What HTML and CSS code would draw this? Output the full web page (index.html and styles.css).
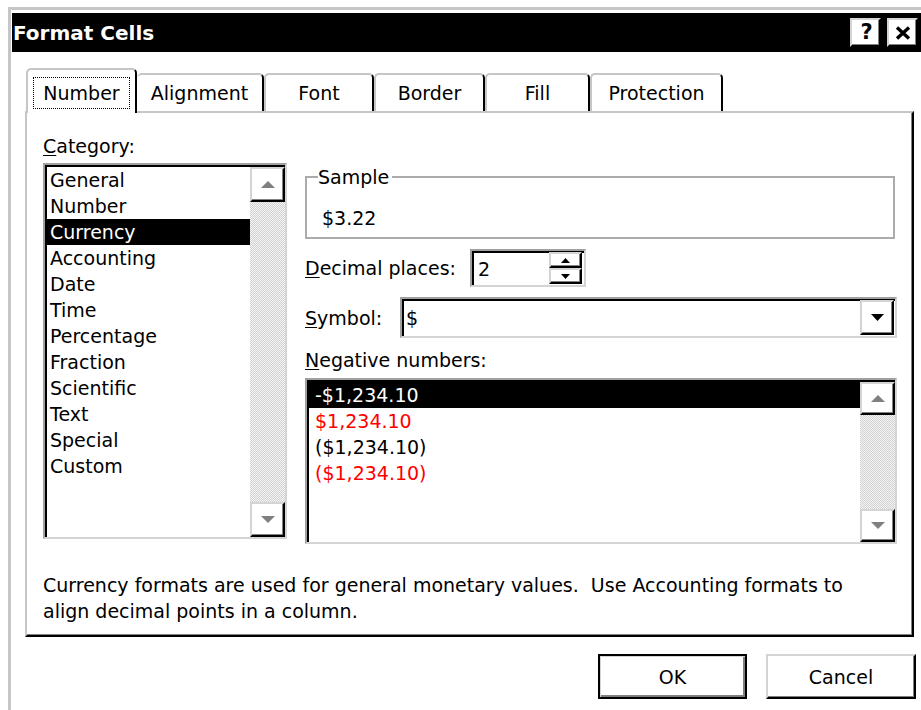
FILE: index.html
```html
<!DOCTYPE html>
<html lang="en">
<head>
<meta charset="utf-8">
<title>Format Cells</title>
<link rel="stylesheet" href="styles.css">
</head>
<body>
<div class="window">
  <div class="titlebar">
    <span class="title">Format Cells</span>
    <div class="caption-buttons">
      <span class="cap-btn cap-help">?</span>
      <span class="cap-btn cap-close">
        <svg width="16" height="14" viewBox="0 0 16 14"><path d="M2 1.5 L14 12.5 M14 1.5 L2 12.5" stroke="#000" stroke-width="3.4" fill="none"/></svg>
      </span>
    </div>
  </div>

  <div class="client">
    <div class="tabs">
      <div class="tab tab-number active"><span class="focus">Number</span></div>
      <div class="tab tab-alignment after-active">Alignment</div>
      <div class="tab tab-font">Font</div>
      <div class="tab tab-border">Border</div>
      <div class="tab tab-fill">Fill</div>
      <div class="tab tab-protection">Protection</div>
    </div>

    <div class="panel">
      <div class="columns">
        <div class="col-left">
          <div class="label"><u>C</u>ategory:</div>
          <div class="listbox category">
            <ul class="items">
              <li>General</li>
              <li>Number</li>
              <li class="selected">Currency</li>
              <li>Accounting</li>
              <li>Date</li>
              <li>Time</li>
              <li>Percentage</li>
              <li>Fraction</li>
              <li>Scientific</li>
              <li>Text</li>
              <li>Special</li>
              <li>Custom</li>
            </ul>
            <div class="vscroll">
              <div class="sbtn">
                <svg width="14" height="7" viewBox="0 0 14 7"><polygon points="0,7 7,0 14,7" fill="#808080"/></svg>
              </div>
              <div class="track"></div>
              <div class="sbtn">
                <svg width="14" height="7" viewBox="0 0 14 7"><polygon points="0,0 14,0 7,7" fill="#808080"/></svg>
              </div>
            </div>
          </div>
        </div>

        <div class="col-right">
          <fieldset class="sample">
            <legend>Sample</legend>
            <div class="sample-value">$3.22</div>
          </fieldset>

          <div class="field-row decimal-row">
            <span class="decimal-label"><u>D</u>ecimal places:</span>
            <div class="spinbox">
              <span class="spin-value">2</span>
              <div class="spin-buttons">
                <div class="spin-btn">
                  <svg width="9" height="5" viewBox="0 0 9 5"><polygon points="0,5 4.5,0 9,5" fill="#000"/></svg>
                </div>
                <div class="spin-btn">
                  <svg width="9" height="5" viewBox="0 0 9 5"><polygon points="0,0 9,0 4.5,5" fill="#000"/></svg>
                </div>
              </div>
            </div>
          </div>

          <div class="field-row symbol-row">
            <span class="symbol-label"><u>S</u>ymbol:</span>
            <div class="combo">
              <span class="combo-value">$</span>
              <div class="combo-btn">
                <svg width="13" height="7" viewBox="0 0 13 7"><polygon points="0,0 13,0 6.5,7" fill="#000"/></svg>
              </div>
            </div>
          </div>

          <div class="label neg-label"><u>N</u>egative numbers:</div>
          <div class="listbox negatives">
            <ul class="items">
              <li class="selected">-$1,234.10</li>
              <li class="red">$1,234.10</li>
              <li>($1,234.10)</li>
              <li class="red">($1,234.10)</li>
            </ul>
            <div class="vscroll">
              <div class="sbtn sbtn-short">
                <svg width="14" height="7" viewBox="0 0 14 7"><polygon points="0,7 7,0 14,7" fill="#808080"/></svg>
              </div>
              <div class="track"></div>
              <div class="sbtn sbtn-short">
                <svg width="14" height="7" viewBox="0 0 14 7"><polygon points="0,0 14,0 7,7" fill="#808080"/></svg>
              </div>
            </div>
          </div>
        </div>
      </div>

      <p class="description">Currency formats are used for general monetary values.&nbsp; Use Accounting formats to<br>align decimal points in a column.</p>
    </div>

    <div class="actions">
      <div class="btn btn-default">OK</div>
      <div class="btn">Cancel</div>
    </div>
  </div>
</div>
</body>
</html>
```

FILE: styles.css
```css
* {
  box-sizing: border-box;
}

html,
body {
  margin: 0;
  padding: 0;
}

body {
  width: 921px;
  height: 710px;
  overflow: hidden;
  background: #fff;
  color: #000;
  font-family: "DejaVu Sans", Verdana, sans-serif;
  font-size: 19px;
  line-height: 26px;
}

/* window frame */
.window {
  margin: 7px 0 0 8px;
  width: 920px;
  height: 720px;
  border-top: 3px solid #c6c6c6;
  border-left: 3px solid #c6c6c6;
  padding: 3px 0 0 1px;
  background: #fff;
}

.titlebar {
  height: 39px;
  background: #000;
  color: #fff;
  display: flex;
  align-items: center;
  padding: 0 10px 0 1px;
  font-weight: bold;
  font-size: 20px;
}

.title {
  flex: 1;
  white-space: nowrap;
}

.caption-buttons {
  display: flex;
  gap: 6px;
}

.cap-btn {
  width: 31px;
  height: 29px;
  border: 2px solid;
  border-color: #d4d4d4 #000 #000 #d4d4d4;
  box-shadow: inset -1px -1px #808080;
  background: #fff;
  color: #000;
  display: flex;
  align-items: center;
  justify-content: center;
  font-size: 21px;
  line-height: 1;
}

.cap-help {
  padding-left: 2px;
}

/* dialog client area */
.client {
  padding: 16px 0 0 13px;
}

.tabs {
  display: flex;
  align-items: flex-end;
  height: 43px;
  padding-left: 1px;
}

.tab {
  height: 38px;
  border: 2px solid #c6c6c6;
  border-bottom: 0;
  border-right-color: #000;
  border-radius: 5px 5px 0 0;
  padding-top: 5px;
  text-align: center;
  background: #fff;
  white-space: nowrap;
}

.tab.after-active {
  border-left: 0;
}

.tab.active {
  height: 45px;
  margin-bottom: -2px;
  padding-top: 7px;
  position: relative;
  z-index: 2;
}

.focus {
  display: inline-block;
  border: 1px dotted #000;
  padding: 2px 9px;
}

.tab-number { width: 111px; }
.tab-alignment { width: 127px; }
.tab-font { width: 110px; }
.tab-border { width: 111px; }
.tab-fill { width: 105px; }
.tab-protection { width: 133px; }

.panel {
  width: 889px;
  height: 526px;
  border: 2px solid;
  border-color: #c6c6c6 #000 #000 #c6c6c6;
  box-shadow: inset -1px -1px #808080;
  padding: 20px 15px 0 16px;
}

.columns {
  display: flex;
  gap: 18px;
  align-items: flex-start;
}

.col-left {
  width: 244px;
}

.label {
  height: 26px;
  white-space: nowrap;
}

u {
  text-decoration-thickness: 1px;
  text-underline-offset: 2px;
}

/* sunken list boxes */
.listbox {
  display: flex;
  border: 2px solid;
  border-color: #a0a0a0 #d4d4d4 #d4d4d4 #a0a0a0;
  box-shadow: inset 2px 2px #000;
  padding: 2px 0 0 2px;
  background: #fff;
}

.category {
  margin-top: 4px;
  height: 376px;
}

.items {
  list-style: none;
  margin: 0;
  padding: 0;
  flex: 1;
}

.items li {
  height: 26px;
  padding-left: 3px;
  white-space: nowrap;
}

.items li.selected {
  background: #000;
  color: #fff;
}

.items li.red {
  color: #ff0000;
}

.vscroll {
  width: 35px;
  display: flex;
  flex-direction: column;
}

.sbtn {
  height: 35px;
  border: 2px solid;
  border-color: #d4d4d4 #000 #000 #d4d4d4;
  box-shadow: inset -1px -1px #808080;
  background: #fff;
  display: flex;
  align-items: center;
  justify-content: center;
}

.sbtn-short {
  height: 33px;
}

/* dithered scrollbar track */
.track {
  flex: 1;
  background: repeating-conic-gradient(#d2d2d2 0% 25%, #f4f4f4 0% 50%) 0 0 / 2px 2px;
}

/* right column */
.col-right {
  width: 592px;
  padding-top: 31px;
  display: flex;
  flex-direction: column;
}

.sample {
  margin: 0 2px 0 0;
  min-width: 0;
  padding: 15px 10px 6px 11px;
  border: 2px solid #ababab;
}

.sample legend {
  padding: 0 3px 0 0;
}

.sample-value {
  padding-left: 4px;
}

.field-row {
  display: flex;
  align-items: center;
  margin-top: 10px;
}

.decimal-label {
  width: 165px;
  white-space: nowrap;
}

.spinbox {
  width: 116px;
  height: 38px;
  display: flex;
  border: 2px solid;
  border-color: #a0a0a0 #d4d4d4 #d4d4d4 #a0a0a0;
  box-shadow: inset 2px 2px #000;
  padding: 1px 2px 1px 2px;
  background: #fff;
}

.spin-value {
  flex: 1;
  padding-left: 4px;
  line-height: 34px;
}

.spin-buttons {
  width: 33px;
  display: flex;
  flex-direction: column;
}

.spin-btn {
  flex: 1;
  border: 2px solid;
  border-color: #d4d4d4 #000 #000 #d4d4d4;
  box-shadow: inset -1px -1px #808080;
  background: #fff;
  display: flex;
  align-items: center;
  justify-content: center;
}

.symbol-label {
  width: 95px;
  white-space: nowrap;
}

.combo {
  flex: 1;
  height: 41px;
  display: flex;
  align-items: center;
  border: 2px solid;
  border-color: #a0a0a0 #d4d4d4 #d4d4d4 #a0a0a0;
  box-shadow: inset 2px 2px #000;
  padding: 1px 1px 1px 2px;
  background: #fff;
}

.combo-value {
  flex: 1;
  padding-left: 2px;
}

.combo-btn {
  width: 34px;
  height: 35px;
  border: 2px solid;
  border-color: #d4d4d4 #000 #000 #d4d4d4;
  box-shadow: inset -1px -1px #808080;
  background: #fff;
  display: flex;
  align-items: center;
  justify-content: center;
}

.neg-label {
  margin-top: 9px;
}

.negatives {
  margin-top: 5px;
  height: 166px;
}

.negatives .items li {
  padding-left: 6px;
}

.description {
  margin: 28px 0 0;
  white-space: nowrap;
}

/* command buttons */
.actions {
  display: flex;
  justify-content: flex-end;
  gap: 19px;
  margin-top: 17px;
  padding-right: 12px;
}

.btn {
  width: 150px;
  height: 45px;
  border: 2px solid;
  border-color: #d4d4d4 #000 #000 #d4d4d4;
  box-shadow: inset -1px -1px #808080;
  background: #fff;
  display: flex;
  align-items: center;
  justify-content: center;
}

.btn-default {
  width: 149px;
  border-color: #000;
  box-shadow: inset 1px 1px #d4d4d4, inset -2px -2px #808080;
}
```
